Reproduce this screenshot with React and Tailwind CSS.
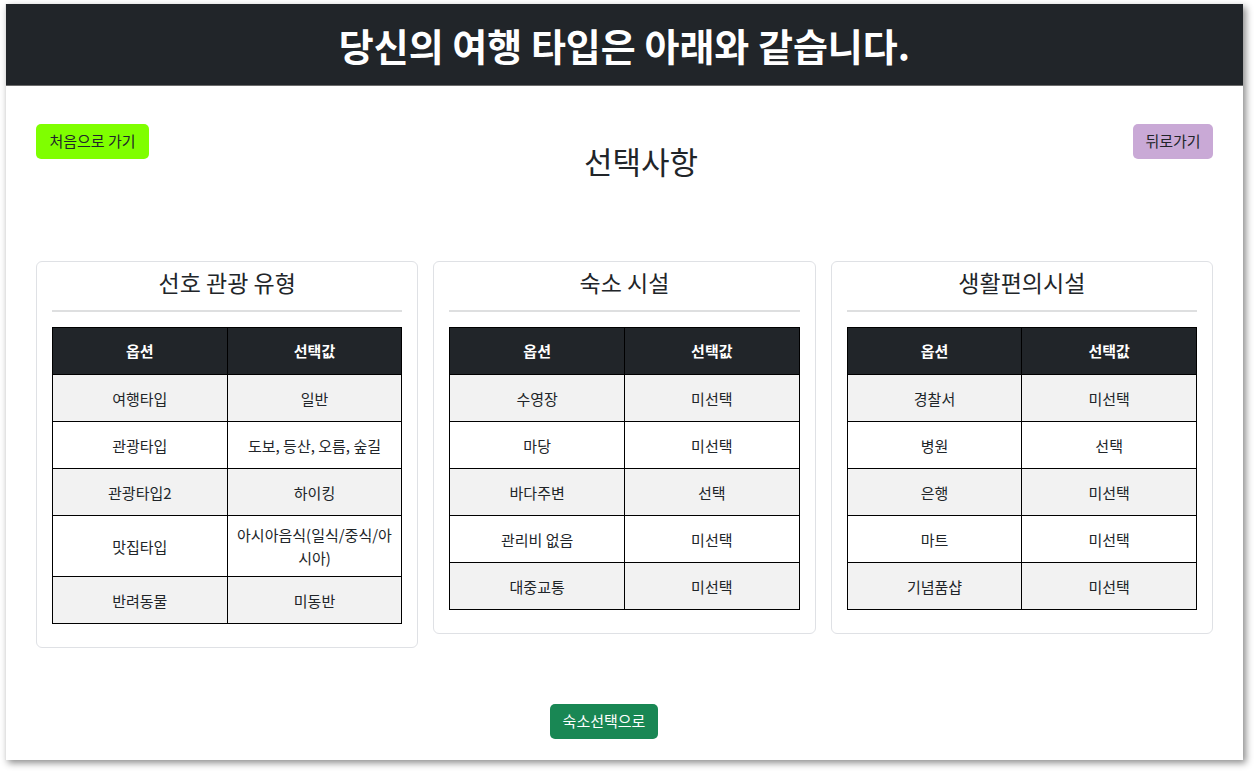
import React from "react";

const FONT = { fontFamily: '"Noto Sans CJK KR", "Noto Sans", sans-serif' };

const cards = [
  {
    title: "선호 관광 유형",
    rows: [
      ["여행타입", "일반"],
      ["관광타입", "도보, 등산, 오름, 숲길"],
      ["관광타입2", "하이킹"],
      ["맛집타입", "아시아음식(일식/중식/아\n시아)"],
      ["반려동물", "미동반"],
    ],
  },
  {
    title: "숙소 시설",
    rows: [
      ["수영장", "미선택"],
      ["마당", "미선택"],
      ["바다주변", "선택"],
      ["관리비 없음", "미선택"],
      ["대중교통", "미선택"],
    ],
  },
  {
    title: "생활편의시설",
    rows: [
      ["경찰서", "미선택"],
      ["병원", "선택"],
      ["은행", "미선택"],
      ["마트", "미선택"],
      ["기념품샵", "미선택"],
    ],
  },
];

function ResultCard({ title, rows }) {
  return (
    <div className="flex-1 border border-[#dfe1e5] rounded-md px-[15px] pt-[5px] pb-[23px]">
      <h4 className="text-center text-[23px] leading-[30px] text-[#212529]">{title}</h4>
      <div className="mt-[13px] h-[2px] bg-[#dedfe0]" />
      <table className="mt-[15px] w-full border-collapse text-[15px] text-[#212529]">
        <thead>
          <tr className="bg-[#212529] text-white font-bold">
            <th className="w-1/2 h-[47px] border border-black">옵션</th>
            <th className="w-1/2 h-[47px] border border-black">선택값</th>
          </tr>
        </thead>
        <tbody>
          {rows.map(([k, v], i) => (
            <tr key={k} className={i % 2 === 0 ? "bg-[#f2f2f2]" : "bg-white"}>
              <td className="h-[47px] border border-black text-center px-2 leading-[23px]">{k}</td>
              <td className="h-[47px] border border-black text-center px-2 py-[7px] leading-[23px] whitespace-pre-line">
                {v}
              </td>
            </tr>
          ))}
        </tbody>
      </table>
    </div>
  );
}

export default function App() {
  return (
    <div className="w-[1256px] h-[773px] bg-white pl-[5px] pt-[4px]" style={FONT}>
      <div className="w-[1238px] h-[756px] bg-white border-l border-[#e3e3e3] shadow-[3px_3px_7px_rgba(0,0,0,0.45)] overflow-hidden">
        {/* header */}
        <div className="h-[82px] bg-[#212529] border-b border-[#6b6b6b] flex items-center justify-center">
          <h1 className="text-white font-bold text-[38px] leading-none">당신의 여행 타입은 아래와 같습니다.</h1>
        </div>

        <div className="px-[30px]">
          {/* top row */}
          <div className="mt-[38px] flex justify-between items-start">
            <button className="w-[113px] h-[35px] rounded-[5px] bg-[#7fff00] text-[15px] text-[#212529]">
              처음으로 가기
            </button>
            <h2 className="mt-[16px] text-[31px] leading-[42px] text-[#212529]">선택사항</h2>
            <button className="w-[80px] h-[35px] rounded-[5px] bg-[#c9a9d6] text-[15px] text-[#212529]">
              뒤로가기
            </button>
          </div>

          {/* cards */}
          <div className="mt-[79px] flex items-start gap-[15px]">
            {cards.map((c) => (
              <ResultCard key={c.title} {...c} />
            ))}
          </div>

          <div className="mt-[56px] flex">
            <button className="ml-[514px] w-[108px] h-[35px] rounded-[5px] bg-[#198754] text-white text-[15px]">
              숙소선택으로
            </button>
          </div>
        </div>
      </div>
    </div>
  );
}
